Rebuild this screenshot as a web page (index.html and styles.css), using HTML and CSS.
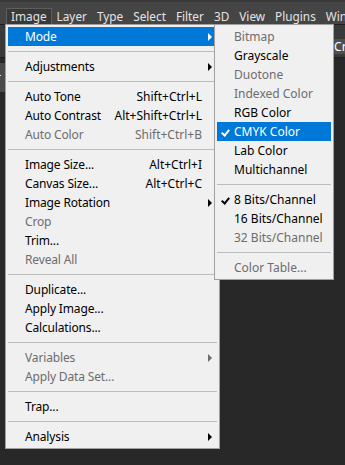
FILE: index.html
```html
<!DOCTYPE html>
<html lang="en">
<head>
  <meta charset="UTF-8" />
  <title>Image Menu</title>
  <link rel="stylesheet" href="styles.css">
</head>
<body>
  <div class="menubar">
    <span class="menubar-item active">Image</span>
    <span class="menubar-item">Layer</span>
    <span class="menubar-item">Type</span>
    <span class="menubar-item">Select</span>
    <span class="menubar-item">Filter</span>
    <span class="menubar-item">3D</span>
    <span class="menubar-item">View</span>
    <span class="menubar-item">Plugins</span>
    <span class="menubar-item">Window</span>
  </div>

  <div class="optionsbar">
    <span class="opt-btn">Create</span>
  </div>

  <div class="tabbar">
    <span class="doc-tab">Layer</span>
  </div>

  <div class="menu main-menu">
    <div class="row hl has-sub">Mode</div>
    <div class="sep"></div>
    <div class="row has-sub">Adjustments</div>
    <div class="sep"></div>
    <div class="row">Auto Tone<span class="key">Shift+Ctrl+L</span></div>
    <div class="row">Auto Contrast<span class="key">Alt+Shift+Ctrl+L</span></div>
    <div class="row off">Auto Color<span class="key">Shift+Ctrl+B</span></div>
    <div class="sep"></div>
    <div class="row">Image Size...<span class="key">Alt+Ctrl+I</span></div>
    <div class="row">Canvas Size...<span class="key">Alt+Ctrl+C</span></div>
    <div class="row has-sub">Image Rotation</div>
    <div class="row off">Crop</div>
    <div class="row">Trim...</div>
    <div class="row off">Reveal All</div>
    <div class="sep"></div>
    <div class="row">Duplicate...</div>
    <div class="row">Apply Image...</div>
    <div class="row">Calculations...</div>
    <div class="sep"></div>
    <div class="row off has-sub">Variables</div>
    <div class="row off">Apply Data Set...</div>
    <div class="sep"></div>
    <div class="row">Trap...</div>
    <div class="sep"></div>
    <div class="row has-sub">Analysis</div>
  </div>

  <div class="menu sub-menu">
    <div class="row off">Bitmap</div>
    <div class="row">Grayscale</div>
    <div class="row off">Duotone</div>
    <div class="row off">Indexed Color</div>
    <div class="row">RGB Color</div>
    <div class="row hl checked">CMYK Color</div>
    <div class="row">Lab Color</div>
    <div class="row">Multichannel</div>
    <div class="sep"></div>
    <div class="row checked">8 Bits/Channel</div>
    <div class="row">16 Bits/Channel</div>
    <div class="row off">32 Bits/Channel</div>
    <div class="sep"></div>
    <div class="row off">Color Table...</div>
  </div>
</body>
</html>
```

FILE: styles.css
```css
body {
  margin: 0;
  background: #282828;
  font-family: 'Noto Sans', 'Open Sans', sans-serif;
  font-size: 12px;
  width: 345px;
  height: 465px;
  overflow: hidden;
  position: relative;
}

.menubar {
  height: 24px;
  background: #454545;
  border-top: 2px solid #3a3a3a;
  box-sizing: border-box;
  display: flex;
  align-items: flex-start;
  padding-left: 6px;
  white-space: nowrap;
  color: #e3e3e3;
  font-size: 11.8px;
}

.menubar-item {
  padding: 0 4px;
  height: 17px;
  line-height: 15px;
  margin-top: 6px;
  border: 1px solid transparent;
  box-sizing: border-box;
}

.menubar-item.active {
  background: #393939;
  border-color: #5e5e5e;
  border-bottom: none;
}

.optionsbar {
  height: 33px;
  background: #393939;
  border-top: 1px solid #1e1e1e;
  box-sizing: border-box;
  display: flex;
  justify-content: flex-end;
  align-items: flex-end;
  padding-bottom: 3px;
  color: #fff;
}

.opt-btn {
  background: #4e4e4e;
  padding: 0 4px;
  height: 15px;
  line-height: 15px;
  margin-right: -30px;
}

.tabbar {
  height: 35px;
  display: flex;
  align-items: flex-end;
  border-top: 1px solid #1e1e1e;
  box-sizing: border-box;
}

.doc-tab {
  background: #4a4a4a;
  color: #fff;
  height: 29px;
  line-height: 29px;
  margin-left: -34px;
  padding: 0 4px;
}

/* drop-down menus */
.menu {
  position: absolute;
  top: 24px;
  background: #f0f0f0;
  border: 1px solid #a0a0a0;
  padding: 2px;
  color: #000;
}

.main-menu {
  left: 5px;
  width: 209px;
}

.sub-menu {
  left: 214px;
  width: 114px;
}

.row {
  height: 19px;
  line-height: 19px;
  padding-left: 17px;
  padding-right: 15px;
  display: flex;
  justify-content: space-between;
  white-space: nowrap;
  position: relative;
}

.main-menu .row {
  letter-spacing: -0.15px;
}

.sub-menu .row {
  padding-left: 17px;
  padding-right: 4px;
}

.row.off {
  color: #6d6d6d;
}

.row.hl {
  background: #0078d7;
  color: #fff;
}

.key {
  text-align: right;
  letter-spacing: 0;
}

.has-sub::after {
  content: '';
  position: absolute;
  right: 5px;
  top: 6px;
  border-left: 4px solid #000;
  border-top: 4px solid transparent;
  border-bottom: 4px solid transparent;
}

.row.hl.has-sub::after {
  border-left-color: #fff;
}

.row.off.has-sub::after {
  border-left-color: #6d6d6d;
}

.checked::before {
  content: '';
  position: absolute;
  left: 6px;
  top: 6px;
  width: 3px;
  height: 6px;
  border-right: 2px solid #000;
  border-bottom: 2px solid #000;
  transform: rotate(40deg);
}

.row.hl.checked::before {
  border-color: #fff;
}

.sep {
  height: 1px;
  background: #bcbcbc;
  margin: 5px 0;
}
```
